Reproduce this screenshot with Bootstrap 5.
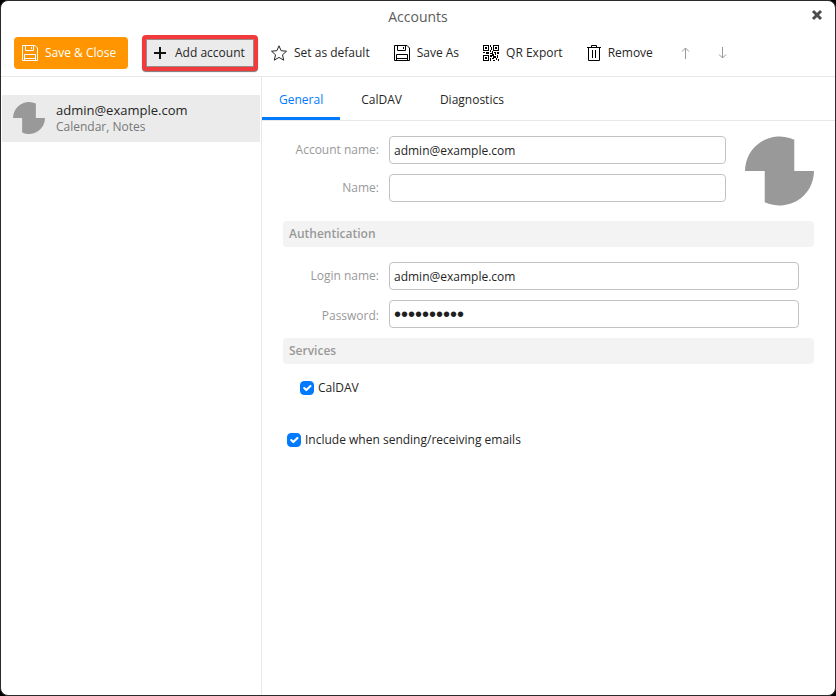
<!DOCTYPE html>
<html lang="en">
<head>
<meta charset="utf-8">
<meta name="viewport" content="width=device-width, initial-scale=1">
<title>Accounts</title>
<link href="https://cdn.jsdelivr.net/npm/bootstrap@5.3.0/dist/css/bootstrap.min.css" rel="stylesheet">
<style>
  body { font-family: "Open Sans", "Noto Sans", sans-serif; font-size: 12px; line-height: 16px; color: #262626; background: #000; }
  .window { border: 1px solid #2b2b2b; border-radius: 8px; }
  .title-bar { height: 32px; font-size: 14px; line-height: 20px; color: #5c5c5c; }
  .close-btn { right: 12px; top: 8px; color: #4d4d4d; }
  .close-btn svg, .tool svg { display: block; flex: none; }
  .toolbar { height: 44px; padding: 0 13px 4px; border-bottom: 1px solid #e8e8e8; }
  .tool { --bs-btn-font-size: 12px; --bs-btn-line-height: 16px; --bs-btn-padding-x: 8px; --bs-btn-padding-y: 8px; --bs-btn-border-width: 0; --bs-btn-border-radius: 4px; --bs-btn-color: #262626; --bs-btn-disabled-color: #999; --bs-btn-disabled-opacity: 1; --bs-btn-hover-bg: #ebebeb; height: 32px; gap: 7px; margin-right: 8px; white-space: nowrap; }
  .tool-save { --bs-btn-color: #fff; --bs-btn-bg: #ff9500; --bs-btn-hover-bg: #f08c00; --bs-btn-hover-color: #fff; width: 114px; margin-right: 14px; }
  .tool-add { --bs-btn-bg: #ebebeb; width: 116px; height: 36px; margin-right: 5px; gap: 9px; border: 4px solid #f23a3d; box-shadow: inset 0 0 0 1px #9a8a8a, 0 1px 1px #777; }
  .tool-move { margin-right: 5px; }
  .sidebar { width: 261px; padding-top: 18px; border-right: 1px solid #e8e8e8; }
  .account { height: 47px; padding: 0 11px 2px; gap: 11px; margin: 0 1px; background: #ebebeb; }
  .account-name { font-size: 13px; line-height: 17px; }
  .account-kind { line-height: 15px; color: #777; }
  .tabs { border-bottom: 1px solid #e8e8e8; --bs-nav-link-color: #262626; }
  .tabs .nav-link { height: 43px; padding: 15px 17px 9px; font-size: 12px; line-height: 16px; border-bottom: 3px solid transparent; }
  .tabs .nav-link + .nav-link { margin-left: 4px; }
  .tabs .nav-link.active { color: #007aff; border-bottom-color: #007aff; }
  .pane { padding: 15px 21px; }
  .field { gap: 10px; }
  .field label { width: 96px; text-align: right; color: #999; flex: none; }
  .field .form-control { height: 28px; min-height: 28px; padding: 4px; font-size: 12px; line-height: 18px; color: #1f1f1f; border-color: #c2c2c2; border-radius: 4px; }
  .field .form-control[type="password"] { font-family: "Liberation Sans", sans-serif; font-size: 20px; }
  .section-title { height: 26px; padding: 0 6px; margin: 0; font-size: 12px; line-height: 26px; font-weight: 600; color: #999; background: #f3f3f3; border-radius: 4px; }
  .identity { gap: 19px; margin-bottom: 15px; }
  .stack { gap: 10px; }
  .stack-auth { padding: 15px 15px 10px 0; }
  .logo { fill: #999; flex: none; }
  .tick { gap: 4px; }
  .tick .form-check-input { width: 14px; height: 14px; margin: 0; border-radius: 4px; flex: none; }
  .tick .form-check-input:checked { background-color: #007aff; border-color: #007aff; background-size: 14px; }
  .tick-service { margin: 16px 0 36px 17px; }
  .tick-include { margin-left: 4px; }
</style>
<script src="https://cdn.jsdelivr.net/npm/bootstrap@5.3.0/dist/js/bootstrap.bundle.min.js"></script>
</head>
<body>
<svg class="d-none" aria-hidden="true">
  <symbol id="disk" viewBox="0 0 16 16"><path d="M.5.5h12.500l2.500 2.500v12.500H.5zM3.500.5v5h8v-5M9.500 2v2M2.500 15.500v-6h11v6M2.500 13.500h11" fill="none" stroke="currentColor"/></symbol>
  <symbol id="swirl" viewBox="0 0 70 70"><path d="M0 35A35 35 0 0 1 50 3.400V35H70A35 35 0 0 1 20 66.600V35Z"/></symbol>
</svg>
<div class="window min-vh-100 bg-white d-flex flex-column overflow-hidden">
  <header class="title-bar position-relative d-flex align-items-center justify-content-center">
    <span>Accounts</span>
    <button type="button" class="close-btn btn border-0 p-0 position-absolute" aria-label="Close"><svg width="12" height="12" viewBox="0 0 12 12"><path d="M2 2l8 8M10 2l-8 8" stroke="currentColor" stroke-width="3"/></svg></button>
  </header>
  <div class="toolbar d-flex align-items-center" role="toolbar" aria-label="Account actions">
    <button type="button" class="tool tool-save btn d-flex align-items-center"><svg width="16" height="16"><use href="#disk"/></svg>Save &amp; Close</button>
    <button type="button" class="tool tool-add btn d-flex align-items-center"><svg width="12" height="12" viewBox="0 0 12 12"><path d="M6 0v12M0 6h12" stroke="#111" stroke-width="2"/></svg>Add account</button>
    <button type="button" class="tool btn d-flex align-items-center"><svg width="16" height="16" viewBox="0 0 16 16"><path d="M8 .8l2.100 4.900 5.400.5-4 3.600 1.200 5.400L8 12.400l-4.700 2.800 1.200-5.400-4-3.600 5.400-.5z" fill="none" stroke="currentColor" stroke-linejoin="round"/></svg>Set as default</button>
    <button type="button" class="tool btn d-flex align-items-center"><svg width="16" height="16" class="text-black"><use href="#disk"/></svg>Save As</button>
    <button type="button" class="tool btn d-flex align-items-center"><svg width="16" height="16" viewBox="0 0 16 16" shape-rendering="crispEdges"><path d="M.5.5h5v5h-5zM10.500.5h5v5h-5zM.5 10.500h5v5h-5z" fill="none" stroke="#000"/><path d="M2 2h2v2H2zM12 2h2v2h-2zM2 12h2v2H2zM7 0h1v2H7zM8 2h1v3H8zM7 5h1v2H7zM0 7h2v1H0zM3 7h3v2H3zM7 8h3v1H7zM9 6h1v2H9zM11 7h2v1h-2zM14 7h2v2h-2zM12 8h1v2h-1zM7 10h2v2H7zM9 9h2v2H9zM10 11h3v2h-3zM14 10h1v3h-1zM7 13h1v3H7zM9 13h2v1H9zM10 15h2v1h-2zM13 13h1v2h-1zM15 14h1v2h-1z"/></svg>QR Export</button>
    <button type="button" class="tool btn d-flex align-items-center"><svg width="14" height="16" viewBox="0 0 14 16"><path d="M0 2.500h14M4.500 2V.5h5V2M1.500 3v12.500h11V3M5.500 5v8M8.500 5v8" fill="none" stroke="#000"/></svg>Remove</button>
    <button type="button" class="tool tool-move btn d-flex align-items-center" aria-label="Move up" disabled><svg width="16" height="16" viewBox="0 0 16 16"><path d="M8.500 14V3M5 6.500L8.500 3 12 6.500" fill="none" stroke="currentColor"/></svg></button>
    <button type="button" class="tool tool-move btn d-flex align-items-center" aria-label="Move down" disabled><svg width="16" height="16" viewBox="0 0 16 16"><path d="M8.500 2v11M5 9.500L8.500 13 12 9.500" fill="none" stroke="currentColor"/></svg></button>
  </div>
  <div class="d-flex flex-grow-1">
    <aside class="sidebar flex-shrink-0">
      <div class="account d-flex align-items-center"><svg class="logo" width="32" height="32"><use href="#swirl"/></svg><div><div class="account-name">admin@example.com</div><div class="account-kind">Calendar, Notes</div></div></div>
    </aside>
    <main class="flex-grow-1">
      <nav class="tabs nav"><a class="nav-link active" href="#">General</a><a class="nav-link" href="#">CalDAV</a><a class="nav-link" href="#">Diagnostics</a></nav>
      <form class="pane">
        <div class="identity d-flex align-items-start">
          <div class="stack d-flex flex-column flex-grow-1">
            <div class="field d-flex align-items-center"><label for="account-name">Account name:</label><input id="account-name" type="text" class="form-control" value="admin@example.com"></div>
            <div class="field d-flex align-items-center"><label for="display-name">Name:</label><input id="display-name" type="text" class="form-control"></div>
          </div>
          <svg class="logo" width="69" height="70"><use href="#swirl"/></svg>
        </div>
        <h2 class="section-title">Authentication</h2>
        <div class="stack stack-auth d-flex flex-column">
          <div class="field d-flex align-items-center"><label for="login-name">Login name:</label><input id="login-name" type="text" class="form-control" value="admin@example.com"></div>
          <div class="field d-flex align-items-end"><label for="password" class="pb-1">Password:</label><input id="password" type="password" class="form-control" value="aaaaaaaaaa"></div>
        </div>
        <h2 class="section-title">Services</h2>
        <div class="tick tick-service d-flex align-items-center"><input id="caldav" type="checkbox" class="form-check-input" checked><label for="caldav">CalDAV</label></div>
        <div class="tick tick-include d-flex align-items-center"><input id="include" type="checkbox" class="form-check-input" checked><label for="include">Include when sending/receiving emails</label></div>
      </form>
    </main>
  </div>
</div>
</body>
</html>
